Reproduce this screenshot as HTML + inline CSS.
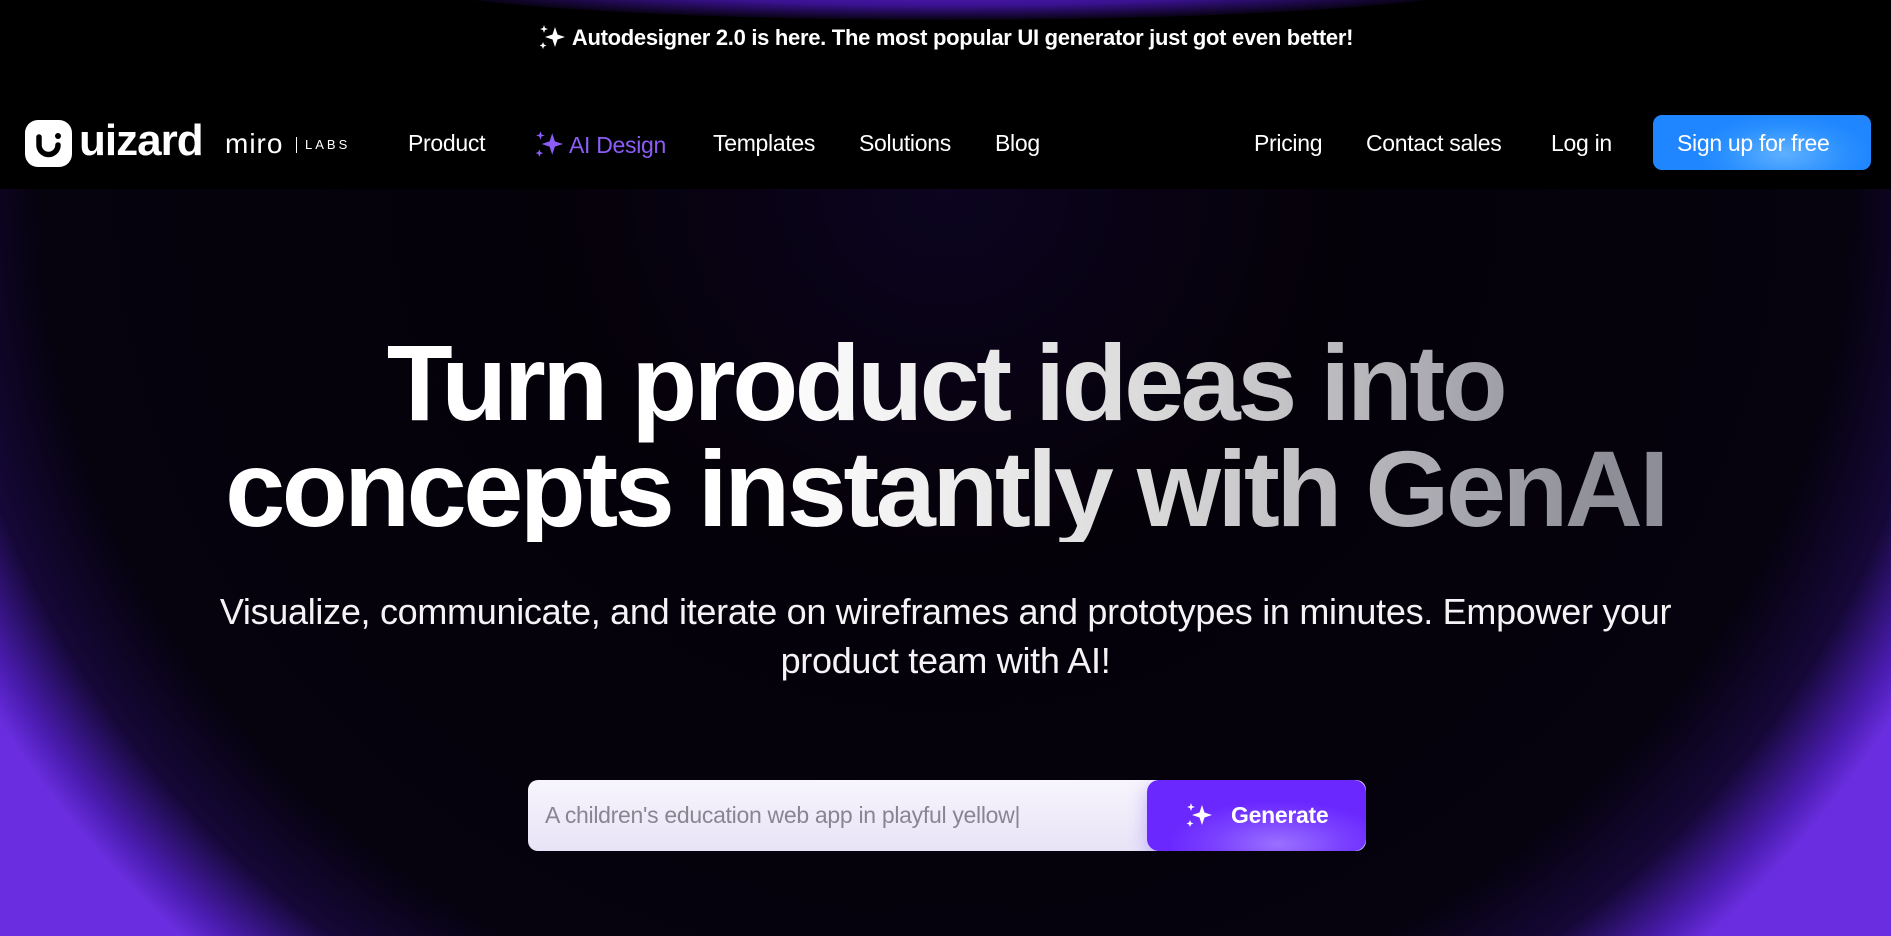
<!DOCTYPE html>
<html><head><meta charset="utf-8"><style>
*{margin:0;padding:0;box-sizing:border-box}
html,body{width:1891px;height:936px;overflow:hidden;background:#000;font-family:"Liberation Sans",sans-serif;color:#fff}
.top{position:absolute;left:0;top:0;width:1891px;height:189px;background:#000;overflow:hidden}
.topglow{position:absolute;left:400px;top:-60px;width:1100px;height:80px;border-radius:50%;background:radial-gradient(ellipse at center,#6a25e0 0%,#3a1290 45%,rgba(0,0,0,0) 75%)}
.banner{position:absolute;top:24px;left:0;width:1891px;text-align:center;font-weight:bold;font-size:22px;letter-spacing:-0.3px}
.nav{position:absolute;top:130px;font-size:23px;letter-spacing:-0.3px}
.hero{position:absolute;left:0;top:189px;width:1891px;height:747px;overflow:hidden;
background:radial-gradient(ellipse 1103px 1036px at 945px 0px,#0c0420 0%,#050109 35%,#06020e 82%,#150838 91%,#4a1cb0 97%,#6a2ee0 100%)}
h1{position:absolute;left:0;width:1891px;text-align:center;font-size:108px;font-weight:bold;letter-spacing:-3.5px;line-height:106px;
background:linear-gradient(90deg,#fff 0%,#fff 40%,#dcdcdc 60%,#8e8e98 85%);-webkit-background-clip:text;background-clip:text;color:transparent}
.sub{position:absolute;left:0;width:1891px;text-align:center;font-size:36px;line-height:49px;letter-spacing:-0.3px;color:#f4f4f6}
.input{position:absolute;left:528px;top:591px;width:838px;height:71px;border-radius:10px;background:linear-gradient(180deg,#f7f5fd,#e8e3f6);overflow:hidden}
.input span{position:absolute;left:17px;top:22px;font-size:23px;color:#8a8592;letter-spacing:-0.3px}
.gen{position:absolute;right:0;top:0;width:219px;height:71px;border-radius:12px;background:radial-gradient(ellipse 50% 60% at 60% 90%,#9a70ff,#7a40ff 60%,#6a28ff);box-shadow:0 6px 18px rgba(120,70,255,.4)}
.gen b{position:absolute;left:84px;top:22px;font-size:23px;letter-spacing:-0.3px}
</style></head><body>
<div class="top">
 <div class="topglow"></div>
 <div class="banner"><svg width="28" height="26" viewBox="0 0 28 26" style="vertical-align:-5px;margin-right:6px"><path d="M17 3 L19.5 10.5 L27 13 L19.5 15.5 L17 23 L14.5 15.5 L7 13 L14.5 10.5Z" fill="#fff"/><path d="M6 1 L7 4 L10 5 L7 6 L6 9 L5 6 L2 5 L5 4Z" fill="#fff"/><path d="M5 18 L6 20.5 L8.5 21.5 L6 22.5 L5 25 L4 22.5 L1.5 21.5 L4 20.5Z" fill="#fff"/></svg>Autodesigner 2.0 is here. The most popular UI generator just got even better!</div>
 <svg style="position:absolute;left:25px;top:120px" width="47" height="47" viewBox="0 0 47 47"><rect width="47" height="47" rx="13" fill="#fff"/><path d="M14 17 v8 a9.5 9.5 0 0 0 19 0" stroke="#000" stroke-width="5.5" fill="none" stroke-linecap="round"/><circle cx="33" cy="16" r="3" fill="#000"/></svg>
 <div style="position:absolute;left:79px;top:116px;font-size:44px;font-weight:bold;letter-spacing:-1px">uizard</div>
 <div style="position:absolute;left:225px;top:128px;font-size:28px;letter-spacing:1px">miro</div>
 <div style="position:absolute;left:296px;top:137px;width:1px;height:16px;background:#fff"></div>
 <div style="position:absolute;left:305px;top:137px;font-size:13px;letter-spacing:3px">LABS</div>
 <div class="nav" style="left:408px">Product</div>
 <div class="nav" style="left:534px;color:#8b5cf6"><svg width="30" height="28" viewBox="0 0 28 26" style="vertical-align:-5px;margin-right:5px"><path d="M17 3 L19.5 10.5 L27 13 L19.5 15.5 L17 23 L14.5 15.5 L7 13 L14.5 10.5Z" fill="#8b5cf6"/><path d="M6 1 L7 4 L10 5 L7 6 L6 9 L5 6 L2 5 L5 4Z" fill="#8b5cf6"/><path d="M5 18 L6 20.5 L8.5 21.5 L6 22.5 L5 25 L4 22.5 L1.5 21.5 L4 20.5Z" fill="#8b5cf6"/></svg>AI Design</div>
 <div class="nav" style="left:713px">Templates</div>
 <div class="nav" style="left:859px">Solutions</div>
 <div class="nav" style="left:995px">Blog</div>
 <div class="nav" style="left:1254px">Pricing</div>
 <div class="nav" style="left:1366px">Contact sales</div>
 <div class="nav" style="left:1551px">Log in</div>
 <div style="position:absolute;left:1653px;top:115px;width:218px;height:55px;border-radius:9px;background:radial-gradient(ellipse 40% 70% at 60% 70%,#5fb0ff,#2a90ff 70%,#1f86ff)"></div>
 <div class="nav" style="left:1677px;top:130px">Sign up for free</div>
</div>
<div class="hero">
 <h1 style="top:141px">Turn product ideas into<br>concepts instantly with GenAI</h1>
 <div class="sub" style="top:398px">Visualize, communicate, and iterate on wireframes and prototypes in minutes. Empower your<br>product team with AI!</div>
 <div class="input"><span>A children's education web app in playful yellow|</span>
  <div class="gen"><svg style="position:absolute;left:38px;top:22px" width="28" height="26" viewBox="0 0 28 26"><path d="M17 3 L19.5 10.5 L27 13 L19.5 15.5 L17 23 L14.5 15.5 L7 13 L14.5 10.5Z" fill="#fff"/><path d="M6 1 L7 4 L10 5 L7 6 L6 9 L5 6 L2 5 L5 4Z" fill="#fff"/><path d="M5 18 L6 20.5 L8.5 21.5 L6 22.5 L5 25 L4 22.5 L1.5 21.5 L4 20.5Z" fill="#fff"/></svg><b>Generate</b></div>
 </div>
</div>
</body></html>
